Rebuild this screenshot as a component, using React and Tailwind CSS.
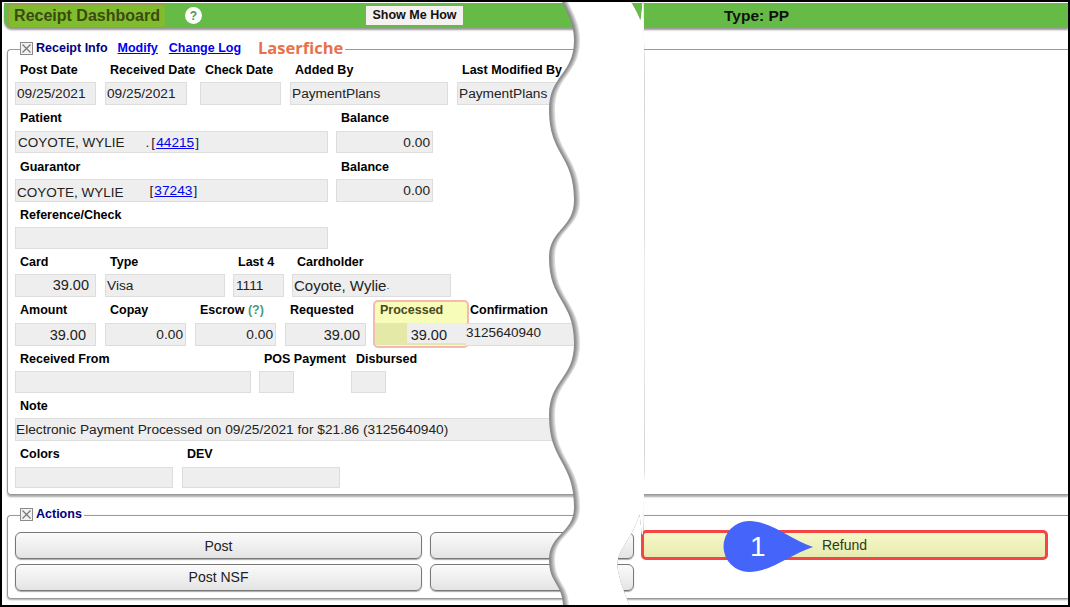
import React from "react";

const EXT = [[574,40],[549,110],[574,200],[549,258],[574,343],[549,416],[574,507],[549,560],[563,607]];
const RIGHT = [[631,2],[640,20],[644,40],[644,495],[639,515],[632,532],[618,558],[620,580],[630,607]];

function leftEdge(dx) {
  let d = `M ${562 + dx} 2 C ${568 + dx} 14 ${574 + dx} 25 ${574 + dx} 40`;
  for (let i = 0; i < EXT.length - 1; i++) {
    const a = EXT[i], b = EXT[i + 1];
    const m = (b[1] - a[1]) / 2;
    d += ` C ${a[0] + dx} ${a[1] + m} ${b[0] + dx} ${b[1] - m} ${b[0] + dx} ${b[1]}`;
  }
  return d;
}
function rightEdge() {
  const r = [...RIGHT].reverse();
  let d = ` L ${r[0][0]} ${r[0][1]}`;
  for (let i = 0; i < r.length - 1; i++) {
    const p0 = r[Math.max(i - 1, 0)], p1 = r[i], p2 = r[i + 1], p3 = r[Math.min(i + 2, r.length - 1)];
    d += ` C ${p1[0] + (p2[0] - p0[0]) / 6} ${p1[1] + (p2[1] - p0[1]) / 6} ${p2[0] - (p3[0] - p1[0]) / 6} ${p2[1] - (p3[1] - p1[1]) / 6} ${p2[0]} ${p2[1]}`;
  }
  return d + " Z";
}
const SHADES = ["#8c8c8c", "#929292", "#a4a4a4", "#b8b8b8", "#cccccc", "#e0e0e0", "#ffffff"];

function Tear() {
  return (
    <svg className="absolute left-[543px] top-0 w-[110px] h-[603px] pointer-events-none z-20" viewBox="545 2 110 603">
      {SHADES.map((c, i) => <path key={i} d={leftEdge(i) + rightEdge()} fill={c} />)}
    </svg>
  );
}

function Check() {
  return (
    <svg width="13" height="13" viewBox="0 0 13 13" className="shrink-0">
      <rect x="0.5" y="0.5" width="12" height="12" fill="#f2f2f2" stroke="#8a8a8a" />
      <path d="M2.5 2.5 L10.5 10.5 M10.5 2.5 L2.5 10.5" stroke="#777" strokeWidth="1.2" />
    </svg>
  );
}

function Field({ label, className = "", h = "h-[23px]", gap = "mb-[6px]", box = "", children }) {
  return (
    <div className={`flex flex-col shrink-0 ${className}`}>
      <div className={`h-[14px] leading-[16px] pl-[5px] text-[12.5px] font-bold text-black whitespace-nowrap ${gap}`}>{label}</div>
      <div className={`${h} bg-[#eeeeee] border border-[#dddddd] text-[13.7px] leading-[21px] text-[#222] whitespace-nowrap overflow-hidden ${box}`}>{children}</div>
    </div>
  );
}

function Btn({ className = "", children }) {
  return (
    <div className={`h-[27px] rounded-[6px] border border-[#777] bg-gradient-to-b from-[#fbfbfb] to-[#e4e4e4] shadow-[0_1px_1px_#aaa] flex items-center justify-center text-[14px] text-[#222] ${className}`}>
      {children}
    </div>
  );
}

export default function App() {
  return (
    <div className="relative w-[1070px] h-[607px] border-2 border-black bg-white overflow-hidden" style={{ fontFamily: '"Liberation Sans", Arial, sans-serif' }}>
      {/* header */}
      <div className="ml-[2px] mt-[1px] h-[25px] bg-[#66bb46] rounded-bl-[8px] shadow-[0_2px_2px_#999] flex items-center">
        <div className="ml-[4px] h-[24px] w-[158px] bg-[#7fbd2d] border border-[#9a9a50] rounded-[3px] flex items-center justify-center text-[16px] font-bold text-[#3c4a12]">Receipt Dashboard</div>
        <div className="ml-[19px] w-[17px] h-[17px] rounded-full bg-white flex items-center justify-center text-[12px] font-bold text-[#4a9a50]">?</div>
        <div className="ml-[164px] w-[97px] h-[19px] bg-[#f6f1f1] flex items-center justify-center text-[12.5px] font-bold text-[#111]">Show Me How</div>
        <div className="ml-[261px] text-[15.5px] font-bold text-[#111]">Type: PP</div>
      </div>

      {/* receipt info */}
      <fieldset className="ml-[5px] mt-[13px] border border-r-0 border-[#999] rounded-l-[4px] pl-[7px] pb-[7px] h-[454px] shadow-[0_2px_2px_#aaa]">
        <legend className="ml-[5px] h-[16px]">
          <div className="flex items-center h-[14px]">
            <Check />
            <span className="ml-[3px] text-[12.5px] font-bold text-[#000080]">Receipt Info</span>
            <span className="ml-[10px] text-[12.5px] font-bold text-[#0000ee] underline">Modify</span>
            <span className="ml-[11px] text-[12.5px] font-bold text-[#0000ee] underline">Change Log</span>
            <span className="ml-[17px] mr-[2px] text-[16.5px] leading-[14px] font-bold text-[#e8714a]" style={{ fontFamily: '"Open Sans", sans-serif' }}>Laserfiche</span>
          </div>
        </legend>

        <div className="flex mt-[5px]">
          <Field label="Post Date" className="w-[81px]" box="pl-[1px]">09/25/2021</Field>
          <Field label="Received Date" className="w-[82px] ml-[9px]" box="pl-[1px]">09/25/2021</Field>
          <Field label="Check Date" className="w-[81px] ml-[13px]" />
          <Field label="Added By" className="w-[158px] ml-[9px]" box="pl-[1px]">PaymentPlans</Field>
          <Field label="Last Modified By" className="w-[118px] ml-[9px]" box="pl-[1px]">PaymentPlans</Field>
        </div>

        <div className="flex mt-[5px]">
          <Field label="Patient" className="w-[313px]" h="h-[22px]" gap="mb-[7px]" box="pl-[2px]">
            <span className="text-[13.5px]">COYOTE, WYLIE</span>
            <span className="ml-[21px] text-[#223]">.</span>
            <span className="ml-[2px] text-[#223]">[</span>
            <span className="ml-[1px] text-[#0000ee] underline">44215</span>
            <span className="ml-[1px] text-[#223]">]</span>
          </Field>
          <Field label="Balance" className="w-[97px] ml-[8px]" h="h-[22px]" gap="mb-[7px]" box="pr-[2px] text-right">0.00</Field>
        </div>

        <div className="flex mt-[6px]">
          <Field label="Guarantor" className="w-[313px]" box="pl-[1px]">
            <span className="relative top-[2px] text-[13.5px]">COYOTE, WYLIE</span>
            <span className="ml-[26px] text-[#223]">[</span>
            <span className="ml-[1px] text-[#0000ee] underline">37243</span>
            <span className="ml-[1px] text-[#223]">]</span>
          </Field>
          <Field label="Balance" className="w-[97px] ml-[8px]" box="pr-[2px] text-right">0.00</Field>
        </div>

        <div className="flex mt-[5px]">
          <Field label="Reference/Check" className="w-[313px]" h="h-[22px]" />
        </div>

        <div className="flex mt-[5px]">
          <Field label="Card" className="w-[81px]" box="pr-[6px] text-right text-[14.5px]">39.00</Field>
          <Field label="Type" className="w-[120px] ml-[9px]" box="pl-[1px]">Visa</Field>
          <Field label="Last 4" className="w-[51px] ml-[8px]" box="pl-[2px]">1111</Field>
          <Field label="Cardholder" className="w-[159px] ml-[8px]" box="pl-[1px] text-[15px]">Coyote, Wylie<span className="text-[9px]">·</span></Field>
        </div>

        <div className="flex mt-[5px]">
          <Field label="Amount" className="w-[81px]" gap="mb-[7px]" box="pr-[9px] text-right text-[14.5px] leading-[22px]">39.00</Field>
          <Field label="Copay" className="w-[81px] ml-[9px]" gap="mb-[7px]" box="pr-[2px] text-right">0.00</Field>
          <Field label={<>Escrow <span className="text-[#4a9a80]">(?)</span></>} className="w-[81px] ml-[9px]" gap="mb-[7px]" box="pr-[2px] text-right">0.00</Field>
          <Field label="Requested" className="w-[81px] ml-[9px]" gap="mb-[7px]" box="pr-[5px] text-right text-[14.5px] leading-[22px]">39.00</Field>
          <div className="relative w-[91px] ml-[9px] shrink-0">
            <div className="absolute left-[-2px] top-[-2px] w-[96px] h-[48px] rounded-[5px] border-2 border-[#f5b9b3] bg-[#f7fcb8]" />
            <div className="relative">
              <div className="h-[14px] leading-[16px] pl-[5px] text-[12.5px] font-bold text-[#4a4a20] mb-[7px]">Processed</div>
              <div className="h-[22px] bg-[#e4e9a8] text-right">
                <div className="ml-[32px] w-[59px] h-[20px] bg-[#eeeeee] text-[14.5px] leading-[24px] pr-[19px] text-[#222]">39.00</div>
              </div>
            </div>
          </div>
          <div className="relative z-10 w-[105px] ml-[4px] shrink-0 flex flex-col">
            <div className="h-[14px] leading-[16px] text-[12.5px] font-bold text-black mb-[7px] whitespace-nowrap">Confirmation</div>
            <div className="h-[23px] bg-[#eeeeee] border border-[#dddddd] border-l-0 text-[13.5px] leading-[18px] text-[#222] -ml-[4px] whitespace-nowrap">3125640940</div>
          </div>
        </div>

        <div className="flex mt-[5px]">
          <Field label="Received From" className="w-[236px]" h="h-[22px]" />
          <Field label="POS Payment" className="w-[35px] ml-[8px]" h="h-[22px]" />
          <Field label="Disbursed" className="w-[35px] ml-[57px]" h="h-[22px]" />
        </div>

        <div className="flex mt-[5px]">
          <Field label="Note" className="w-[560px]" box="pl-[0px]">Electronic Payment Processed on 09/25/2021 for $21.86 (3125640940)</Field>
        </div>

        <div className="flex mt-[5px]">
          <Field label="Colors" className="w-[158px]" h="h-[21px]" gap="mb-[7px]" />
          <Field label="DEV" className="w-[158px] ml-[9px]" h="h-[21px]" gap="mb-[7px]" />
        </div>
      </fieldset>

      {/* actions */}
      <fieldset className="ml-[5px] mt-[12px] border border-r-0 border-[#999] rounded-l-[4px] pl-[7px] h-[92px] shadow-[0_1px_2px_#aaa]">
        <legend className="ml-[5px] h-[16px]">
          <div className="flex items-center h-[14px]">
            <Check />
            <span className="ml-[3px] mr-[2px] text-[12.5px] font-bold text-[#000080]">Actions</span>
          </div>
        </legend>
        <div className="flex mt-[9px]">
          <Btn className="w-[407px] pt-[1px]">Post</Btn>
          <Btn className="w-[204px] ml-[8px]" />
          <div className="w-[407px] h-[30px] -mt-[2px] ml-[7px] pt-[1px] rounded-[5px] border-[3px] border-[#f54545] bg-gradient-to-b from-[#f6f8c8] to-[#e8ebb0] flex items-center justify-center text-[14px] text-[#2a3a1a]">Refund</div>
        </div>
        <div className="flex mt-[4px]">
          <Btn className="w-[407px]">Post NSF</Btn>
          <Btn className="w-[204px] ml-[8px]" />
        </div>
      </fieldset>

      <Tear />

      {/* callout marker */}
      <div className="absolute left-[721px] top-[519px] w-[91px] h-[52px] z-30">
        <svg width="91" height="52" viewBox="0 0 91 52" className="absolute inset-0">
          <path d="M90 26 C 68 19 48 0 26 0 A 25.5 25.5 0 0 0 26 51 C 48 51 68 33 90 26 Z" fill="#4464fa" />
        </svg>
        <span className="absolute left-[27px] top-[8px] text-[28px] leading-[36px] text-white">1</span>
      </div>
    </div>
  );
}
